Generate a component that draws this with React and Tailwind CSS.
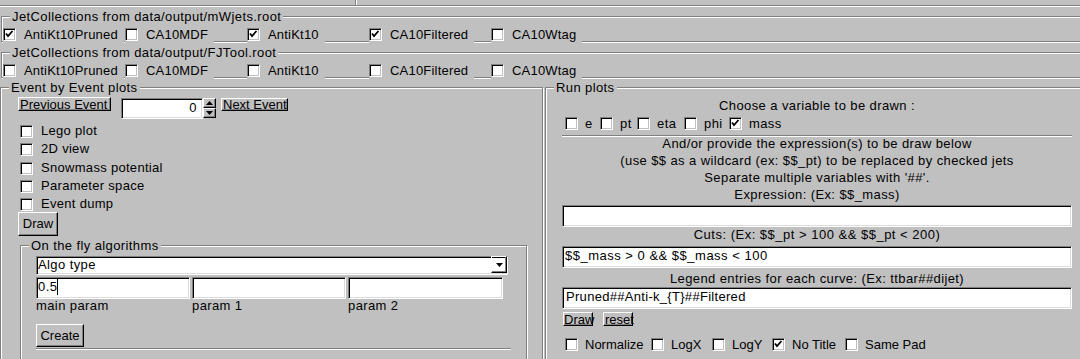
const raised = 'border border-t-white border-l-white border-r-black border-b-black shadow-[inset_-1px_-1px_0_#808080] tracking-normal'
const sunken = 'bg-white border border-t-[#808080] border-l-[#808080] border-r-white border-b-white shadow-[inset_1px_1px_0_#000,inset_-1px_-1px_0_#dcdcdc]'

const wJets = [
  { label: 'AntiKt10Pruned', on: true },
  { label: 'CA10MDF', on: false },
  { label: 'AntiKt10', on: true },
  { label: 'CA10Filtered', on: true },
  { label: 'CA10Wtag', on: false }
]

const fjJets = [
  { label: 'AntiKt10Pruned', on: false },
  { label: 'CA10MDF', on: false },
  { label: 'AntiKt10', on: false },
  { label: 'CA10Filtered', on: false },
  { label: 'CA10Wtag', on: false }
]

const eventOpts = [
  { label: 'Lego plot', gap: 'mt-[6px]' },
  { label: '2D view', gap: 'mt-[5px]' },
  { label: 'Snowmass potential', gap: 'mt-[6px]' },
  { label: 'Parameter space', gap: 'mt-[5px]' },
  { label: 'Event dump', gap: 'mt-[5px]' }
]

const variables = [
  { label: 'e', w: 'w-[35px]' },
  { label: 'pt', w: 'w-[37px]' },
  { label: 'eta', w: 'w-[47px]' },
  { label: 'phi', w: 'w-[45px]' },
  { label: 'mass', w: 'w-[60px]', on: true }
]

const plotOpts = [
  { label: 'Normalize', w: 'w-[86px]' },
  { label: 'LogX', w: 'w-[61px]' },
  { label: 'LogY', w: 'w-[60px]' },
  { label: 'No Title', w: 'w-[73px]', on: true },
  { label: 'Same Pad', w: 'w-[90px]' }
]

function Box({ checked }) {
  return (
    <span className="w-[13px] h-[13px] shrink-0 bg-white border border-t-[#808080] border-l-[#808080] border-r-white border-b-white shadow-[inset_1px_1px_0_#000,inset_-1px_-1px_0_#c0c0c0]">
      {checked && (
        <svg width="11" height="11" viewBox="0 0 11 11" className="block">
          <polyline points="2,4.5 4,7 8.5,2" fill="none" stroke="#000" strokeWidth="1.8" />
        </svg>
      )}
    </span>
  )
}

function Group({ title, className = '', children }) {
  return (
    <div className={`relative border border-[#808080] shadow-[inset_1px_1px_0_#fff,1px_1px_0_#fff] ${className}`}>
      <span className="absolute -top-[7px] left-[8px] bg-[#c0c0c0] px-[2px] whitespace-nowrap z-10">{title}</span>
      {children}
    </div>
  )
}

function JetRow({ jets }) {
  return (
    <div className="flex pl-[1px] pt-[5px]">
      {jets.map((j) => (
        <div key={j.label} className="w-[122px] shrink-0">
          <div className="relative inline-flex h-[21px] pt-[6px] pr-[6px] bg-[#c0c0c0]">
            <Box checked={j.on} />
            <span className="ml-[8px] whitespace-nowrap tracking-[0.2px]">{j.label}</span>
          </div>
        </div>
      ))}
    </div>
  )
}

function Groove({ className = '' }) {
  return <div className={`h-[2px] border-t border-t-[#808080] border-b border-b-white ${className}`} />
}

function Arrow({ up }) {
  return (
    <svg width="7" height="4" viewBox="0 0 7 4" className="block">
      <polygon points={up ? '0,4 7,4 3.5,0' : '0,0 7,0 3.5,4'} fill="#000" />
    </svg>
  )
}

export default function App() {
  return (
    <div className="w-[1080px] h-[359px] overflow-hidden bg-[#c0c0c0] font-['Liberation_Sans',Arial,sans-serif] text-[13px] leading-[13px] tracking-[0.4px] text-black">
      <div className="h-[5px] flex">
        <div className="ml-[355px] w-[2px] border-l border-l-[#808080] border-r border-r-white" />
      </div>
      <Groove />

      <Group title="JetCollections from data/output/mWjets.root" className="ml-[1px] -mr-[4px] h-[26px] mt-[9px]">
        <JetRow jets={wJets} />
      </Group>

      <Group title="JetCollections from data/output/FJTool.root" className="ml-[1px] -mr-[4px] h-[26px] mt-[10px]">
        <JetRow jets={fjJets} />
      </Group>

      <div className="flex items-start mt-[9px]">
        {/* event by event */}
        <Group title="Event by Event plots" className="w-[543px] h-[300px] shrink-0">
          <div className="pl-[17px]">
            <div className="flex items-start mt-[9px]">
              <button className={`${raised} h-[14px] w-[93px] leading-[11px] text-left pl-[1px]`}>Previous Event</button>
              <div className={`${sunken} ml-[10px] mt-[1px] w-[82px] h-[21px] leading-[17px] text-right pr-[5px]`}>0</div>
              <div className="mt-[1px] flex flex-col">
                <div className={`${raised} w-[13px] h-[10px] flex items-center justify-center`}><Arrow up /></div>
                <div className={`${raised} w-[13px] h-[10px] flex items-center justify-center`}><Arrow /></div>
              </div>
              <button className={`${raised} ml-[5px] mt-[1px] h-[13px] w-[67px] leading-[10px] text-left pl-[1px]`}>Next Event</button>
            </div>

            {eventOpts.map((o) => (
              <div key={o.label} className={`flex h-[13px] ml-[2px] ${o.gap}`}>
                <Box />
                <span className="ml-[8px] -mt-[1px] whitespace-nowrap tracking-[0.3px]">{o.label}</span>
              </div>
            ))}

            <button className={`${raised} mt-[1px] w-[40px] h-[24px] leading-[22px] text-center block`}>Draw</button>

            <Group title="On the fly algorithms" className="ml-[2px] mt-[9px] w-[507px] h-[130px]">
              <div className="pl-[15px] pt-[10px]">
                <div className={`${sunken} w-[472px] h-[19px] flex items-start`}>
                  <span className="flex-1 leading-[15px] pl-[1px]">Algo type</span>
                  <div className={`${raised} w-[16px] h-[17px] -mt-[1px] flex items-center justify-center`}><Arrow /></div>
                </div>
                <div className="flex gap-[2px] mt-[2px]">
                  <div className={`${sunken} w-[154px] h-[22px] leading-[18px] pl-[1px] flex`}>
                    <span>0.5</span>
                    <span className="w-[1px] h-[16px] mt-[1px] bg-black" />
                  </div>
                  <div className={`${sunken} w-[154px] h-[22px]`} />
                  <div className={`${sunken} w-[155px] h-[22px]`} />
                </div>
                <div className="flex">
                  <span className="w-[156px]">main param</span>
                  <span className="w-[156px]">param 1</span>
                  <span>param 2</span>
                </div>
                <button className={`${raised} mt-[12px] w-[48px] h-[23px] leading-[21px] text-center block`}>Create</button>
                <Groove className="mt-[1px] w-[475px]" />
              </div>
            </Group>
          </div>
        </Group>

        {/* run plots */}
        <Group title="Run plots" className="ml-[2px] w-[540px] h-[300px] shrink-0">
          <div className="pl-[16px] w-[526px]">
            <div className="mt-[9px] h-[17px] leading-[17px] text-center">Choose a variable to be drawn :</div>
            <div className="flex h-[13px] mt-[3px] ml-[3px]">
              {variables.map((v) => (
                <div key={v.label} className={`flex shrink-0 ${v.w}`}>
                  <Box checked={v.on} />
                  <span className="ml-[7px]">{v.label}</span>
                </div>
              ))}
            </div>
            <Groove className="mt-[5px]" />
            <div className="-mt-[2px] leading-[17px] text-center">
              <div>And/or provide the expression(s) to be draw below</div>
              <div>(use $$ as a wildcard (ex: $$_pt) to be replaced by checked jets</div>
              <div>Separate multiple variables with '##'.</div>
              <div>Expression: (Ex: $$_mass)</div>
            </div>
            <div className={`${sunken} mt-[2px] h-[22px]`} />
            <div className="mt-[1px] text-center tracking-[0.5px]">Cuts: (Ex: $$_pt &gt; 100 &amp;&amp; $$_pt &lt; 200)</div>
            <div className={`${sunken} mt-[5px] h-[22px] leading-[18px] pl-[2px] tracking-[0.5px]`}>$$_mass &gt; 0 &amp;&amp; $$_mass &lt; 100</div>
            <div className="mt-[4px] text-center">Legend entries for each curve: (Ex: ttbar##dijet)</div>
            <div className={`${sunken} mt-[2px] h-[22px] leading-[18px] pl-[3px] tracking-[0.3px]`}>Pruned##Anti-k_&#123;T&#125;##Filtered</div>
            <div className="flex mt-[3px] ml-[1px]">
              <button className={`${raised} h-[14px] w-[30px] leading-[11px] text-left`}>Draw</button>
              <button className={`${raised} ml-[10px] h-[14px] w-[30px] leading-[11px] text-left pl-[1px]`}>reset</button>
            </div>
            <div className="flex h-[13px] mt-[12px] ml-[3px] tracking-normal">
              {plotOpts.map((o) => (
                <div key={o.label} className={`flex shrink-0 ${o.w}`}>
                  <Box checked={o.on} />
                  <span className="ml-[7px] whitespace-nowrap">{o.label}</span>
                </div>
              ))}
            </div>
          </div>
        </Group>
      </div>
    </div>
  )
}
